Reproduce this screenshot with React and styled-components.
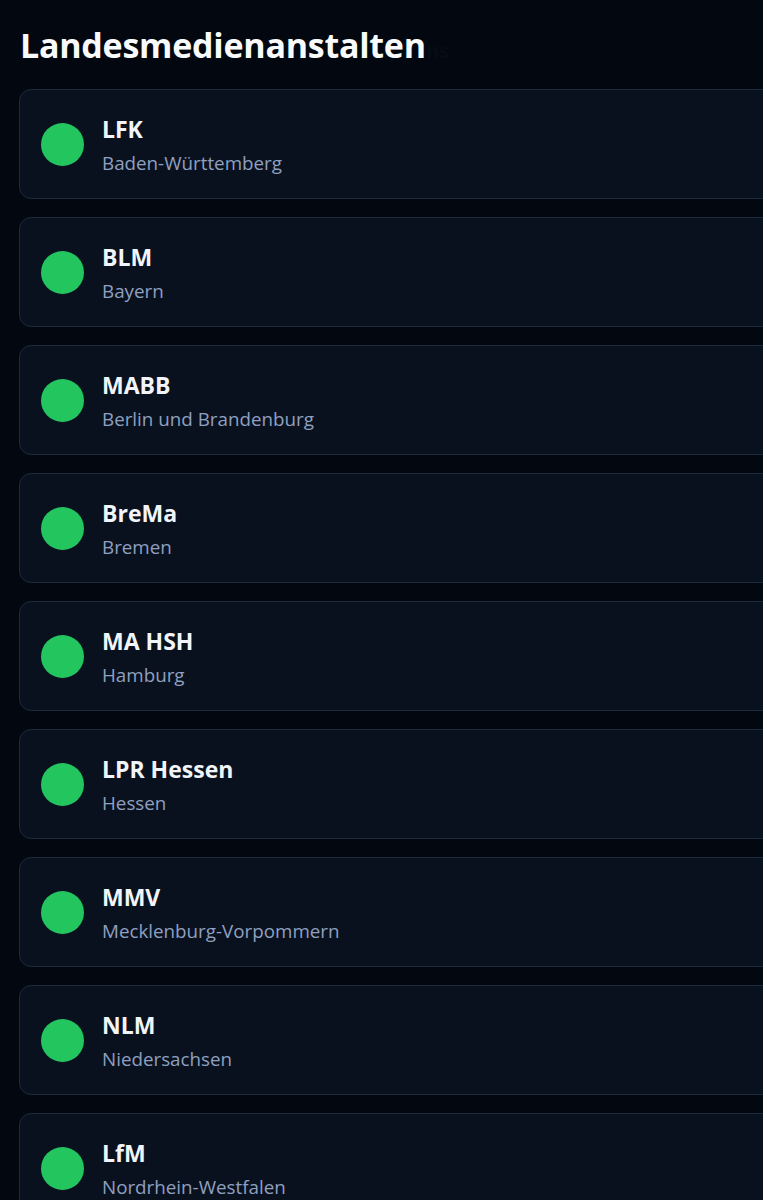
import React from 'react';
import styled, { createGlobalStyle } from 'styled-components';

const GlobalStyle = createGlobalStyle`
  html, body {
    margin: 0;
    padding: 0;
    background: #03070f;
    overflow: hidden;
  }
  body {
    font-family: 'Open Sans', 'Noto Sans', sans-serif;
  }
`;

const Page = styled.div`
  padding: 0 0 40px 19px;
  width: 820px;
`;

const Header = styled.div`
  height: 89px;
  display: flex;
  align-items: center;
  padding-left: 1px;
`;

const Title = styled.h1`
  margin: 0;
  font-size: 34px;
  font-weight: 700;
  color: #f8fafc;
  letter-spacing: -0.25px;
`;

const Ghost = styled.span`
  font-size: 19px;
  margin-left: 1px;
  color: rgba(148, 163, 184, 0.05);
`;

const List = styled.div`
  display: flex;
  flex-direction: column;
  gap: 18px;
`;

const Card = styled.div`
  box-sizing: border-box;
  height: 110px;
  display: flex;
  align-items: center;
  gap: 18px;
  padding: 0 21px;
  background: #0a111e;
  border: 1px solid #1c2a3d;
  border-radius: 12px;
`;

const Dot = styled.div`
  width: 43px;
  height: 43px;
  border-radius: 50%;
  background: ${(p) => p.color || '#22c55e'};
  flex-shrink: 0;
`;

const Info = styled.div`
  display: flex;
  flex-direction: column;
  gap: 5px;
  padding-top: 2px;
`;

const Name = styled.div`
  font-size: 23px;
  font-weight: 700;
  color: #f1f5f9;
  line-height: 30px;
`;

const Region = styled.div`
  font-size: 18.8px;
  color: #8fa0c0;
  line-height: 28px;
`;

const stations = [
  { name: 'LFK', region: 'Baden-Württemberg' },
  { name: 'BLM', region: 'Bayern' },
  { name: 'MABB', region: 'Berlin und Brandenburg' },
  { name: 'BreMa', region: 'Bremen' },
  { name: 'MA HSH', region: 'Hamburg' },
  { name: 'LPR Hessen', region: 'Hessen' },
  { name: 'MMV', region: 'Mecklenburg-Vorpommern' },
  { name: 'NLM', region: 'Niedersachsen' },
  { name: 'LfM', region: 'Nordrhein-Westfalen' },
  { name: 'LMK', region: 'Rheinland-Pfalz' },
];

const App = () => {
  return (
    <>
      <GlobalStyle />
      <Page>
        <Header>
          <Title>
            Landesmedienanstalten<Ghost>ns</Ghost>
          </Title>
        </Header>
        <List>
          {stations.map((s) => (
            <Card key={s.name}>
              <Dot />
              <Info>
                <Name>{s.name}</Name>
                <Region>{s.region}</Region>
              </Info>
            </Card>
          ))}
        </List>
      </Page>
    </>
  );
};

export default App;
